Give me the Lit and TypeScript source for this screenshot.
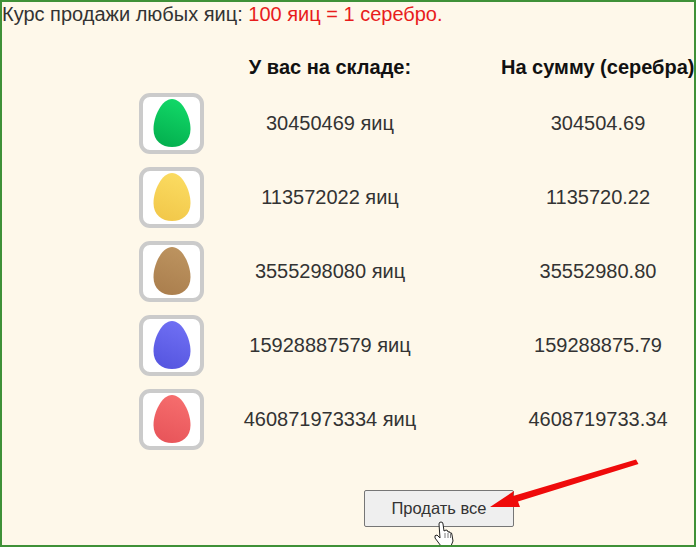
import { LitElement, html, css, svg } from "lit";
import { customElement } from "lit/decorators.js";

const rows = [
  { c: ["#12d968", "#04b04f"], n: "30450469 яиц", s: "304504.69" },
  { c: ["#fbdc62", "#f2c84a"], n: "113572022 яиц", s: "1135720.22" },
  { c: ["#bd9460", "#ab7f4e"], n: "3555298080 яиц", s: "35552980.80" },
  { c: ["#7070f4", "#5656e0"], n: "15928887579 яиц", s: "159288875.79" },
  { c: ["#f66e6e", "#e8555a"], n: "460871973334 яиц", s: "4608719733.34" },
];

@customElement("app-root")
export class AppRoot extends LitElement {
  static styles = css`
    :host { display: block; width: 696px; height: 547px; font-family: "Liberation Sans", Arial, sans-serif; }
    .frame { position: relative; box-sizing: border-box; width: 696px; height: 547px; background: #fef8ea; border: 2px solid #3f9138; overflow: hidden; color: #333; }
    .rate { font-size: 20px; line-height: 24px; height: 24px; white-space: nowrap; }
    .rate span { color: #e81c1c; }
    .grid { display: grid; grid-template-columns: 65px 252px 192px; margin: 29px 0 0 137px; width: 560px; font-size: 20px; }
    .head { font-weight: bold; color: #111; text-align: center; white-space: nowrap; line-height: 24px; height: 31px; }
    .h3 { margin-left: 45px; width: 192px; }
    .cell { height: 74px; display: flex; align-items: center; justify-content: center; white-space: nowrap; color: #333; }
    .c3 { margin-left: 46px; width: 192px; }
    .icon { box-sizing: border-box; width: 65px; height: 61px; background: #fff; border: 4px solid #cbcbcb; border-radius: 11px; display: flex; align-items: center; justify-content: center; }
    .icon svg { display: block; }
    .foot { position: absolute; top: 488px; left: 362px; }
    button { box-sizing: border-box; width: 150px; height: 37px; background: #efefef; border: 1px solid #767676; border-radius: 2px; font: 16.5px "Liberation Sans", Arial, sans-serif; color: #333; padding: 0; }
    .over { position: absolute; left: -2px; top: -2px; pointer-events: none; }
  `;

  egg(c: string[], i: number) {
    return svg`<svg width="38" height="50" viewBox="0 0 38 50">
      <defs><linearGradient id="g${i}" x1="0.7" y1="0" x2="0.4" y2="1"><stop offset="0" stop-color="${c[0]}"/><stop offset="1" stop-color="${c[1]}"/></linearGradient></defs>
      <path d="M19 1C29 1 37.5 18 37.5 31C37.5 43 29 49 19 49C9 49 .5 43 .5 31C.5 18 9 1 19 1Z" fill="url(#g${i})"/>
    </svg>`;
  }

  render() {
    return html`<div class="frame">
      <div class="rate">Курс продажи любых яиц: <span>100 яиц = 1 серебро.</span></div>
      <div class="grid">
        <div class="head"></div>
        <div class="head">У вас на складе:</div>
        <div class="head h3">На сумму (серебра)</div>
        ${rows.map((r, i) => html`
          <div class="cell"><div class="icon">${this.egg(r.c, i)}</div></div>
          <div class="cell">${r.n}</div>
          <div class="cell c3">${r.s}</div>
        `)}
      </div>
      <div class="foot"><button>Продать все</button></div>
      <svg class="over" width="696" height="547" viewBox="0 0 696 547">
        <path d="M636 459.5L638.5 464L518 501.5L520 507L490 507L514 491L513 496Z" fill="#ef0b0b"/>
        <path d="M441 546L435 538Q434 535 437 535L440 538L439 524Q439 522 441 522Q443 522 443 524L444 531L446 530Q448 530 448 532Q450 531 450 533Q452 532 452 535L453 541L451 546Z" fill="#fff" stroke="#222" stroke-width="1"/>
        <path d="M445 533V538M448 533V538M450.500 534V538" fill="none" stroke="#444" stroke-width="0.7"/>
      </svg>
    </div>`;
  }
}
